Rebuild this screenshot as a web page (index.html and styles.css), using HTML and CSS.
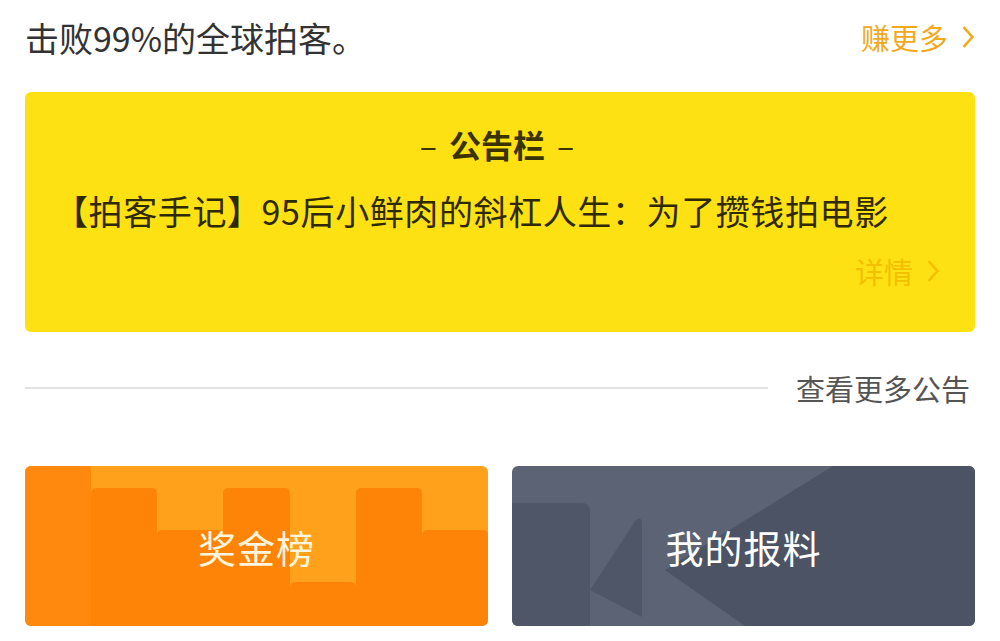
FILE: index.html
```html
<!DOCTYPE html>
<html lang="zh-CN">
<head>
    <meta charset="UTF-8">
    <meta name="viewport" content="width=device-width, initial-scale=1.0">
    <title>拍客中心</title>
    <link rel="stylesheet" href="styles.css">
</head>
<body>
    <div class="page">
        <div class="rank-row">
            <span class="rank-text">击败99%的全球拍客。</span>
            <a class="more-link earn">赚更多
                <svg class="chevron" viewBox="0 0 12 22"><polyline points="2,2 10,11 2,20"/></svg>
            </a>
        </div>

        <div class="notice">
            <div class="notice-title"><span class="dash">–</span>公告栏<span class="dash">–</span></div>
            <div class="notice-headline">【拍客手记】95后小鲜肉的斜杠人生：为了攒钱拍电影</div>
            <a class="more-link detail">详情
                <svg class="chevron" viewBox="0 0 12 22"><polyline points="2,2 10,11 2,20"/></svg>
            </a>
        </div>

        <div class="divider-row">
            <div class="divider"></div>
            <a class="all-notices">查看更多公告</a>
        </div>

        <div class="tiles">
            <a class="tile tile-bonus">
                <div class="bars">
                    <div class="bar" style="height: 160px"></div>
                    <div class="bar" style="height: 138px"></div>
                    <div class="bar" style="height: 96px"></div>
                    <div class="bar" style="height: 138px"></div>
                    <div class="bar" style="height: 44px"></div>
                    <div class="bar" style="height: 138px"></div>
                    <div class="bar" style="height: 96px"></div>
                </div>
                <span class="tile-label">奖金榜</span>
            </a>
            <a class="tile tile-report">
                <!-- camcorder shapes behind the label -->
                <svg class="tile-art" viewBox="0 0 463 160" preserveAspectRatio="none">
                    <path d="M0 37 H70 Q78 37 78 45 V160 H0 Z" fill="#4f5667"/>
                    <path d="M124 54 Q130 50 130 58 V151 L78 124 Z" fill="#4f5667"/>
                    <polygon points="153,104 321,0 463,0 463,160 233,160" fill="#4c5364"/>
                </svg>
                <span class="tile-label">我的报料</span>
            </a>
        </div>
    </div>
</body>
</html>
```

FILE: styles.css
```css
body {
    margin: 0;
    background-color: #fff;
    font-family: "Noto Sans CJK SC", "Noto Sans", sans-serif;
}
a {
    text-decoration: none;
    color: inherit;
}
.page {
    padding: 0 25px;
}

.rank-row {
    height: 74px;
    display: flex;
    align-items: center;
    justify-content: space-between;
}
.rank-text {
    font-size: 34px;
    color: #333;
}
.more-link {
    display: flex;
    align-items: center;
    gap: 13px;
}
.chevron {
    width: 14px;
    height: 24px;
    fill: none;
    stroke: currentColor;
    stroke-width: 2.4;
}
.earn {
    font-size: 29px;
    color: #f1a91e;
}

.notice {
    margin-top: 18px;
    height: 240px;
    box-sizing: border-box;
    padding: 32px 35px 0 29px;
    background-color: #fde112;
    border-radius: 6px;
    display: flex;
    flex-direction: column;
}
.notice-title {
    display: flex;
    justify-content: center;
    gap: 12px;
    font-size: 32px;
    font-weight: 700;
    line-height: 40px;
    color: #3a3300;
}
.dash {
    font-weight: 400;
}
.notice-headline {
    margin-top: 27px;
    font-size: 34px;
    letter-spacing: 0.6px;
    line-height: 40px;
    color: #2f2a05;
    white-space: nowrap;
}
.detail {
    margin-top: 22px;
    align-self: flex-end;
    font-size: 29px;
    line-height: 36px;
    color: #f2c000;
}

.divider-row {
    margin-top: 36px;
    height: 40px;
    display: flex;
    align-items: center;
    gap: 28px;
}
.divider {
    flex: 1;
    height: 2px;
    background-color: #e2e2e2;
}
.all-notices {
    font-size: 29px;
    color: #555;
    padding-right: 5px;
}

.tiles {
    margin-top: 58px;
    display: grid;
    grid-template-columns: 1fr 1fr;
    gap: 24px;
}
.tile {
    height: 160px;
    border-radius: 6px;
    overflow: hidden;
    display: grid;
    place-items: center;
}
.tile > * {
    grid-area: 1 / 1;
}
.tile-label {
    position: relative;
    font-size: 38px;
    letter-spacing: 1px;
}

.tile-bonus {
    background-color: #ffa11b;
    color: #fff4dc;
}
.bars {
    align-self: stretch;
    justify-self: stretch;
    display: flex;
    align-items: flex-end;
}
.bar {
    flex: 1;
    background-color: #fd8407;
    border-radius: 5px 5px 0 0;
}
.bar:first-child {
    background-color: #ff880e;
    border-radius: 0;
}

.tile-report {
    background-color: #5b6374;
    color: #fff;
}
.tile-art {
    width: 100%;
    height: 100%;
}
```
